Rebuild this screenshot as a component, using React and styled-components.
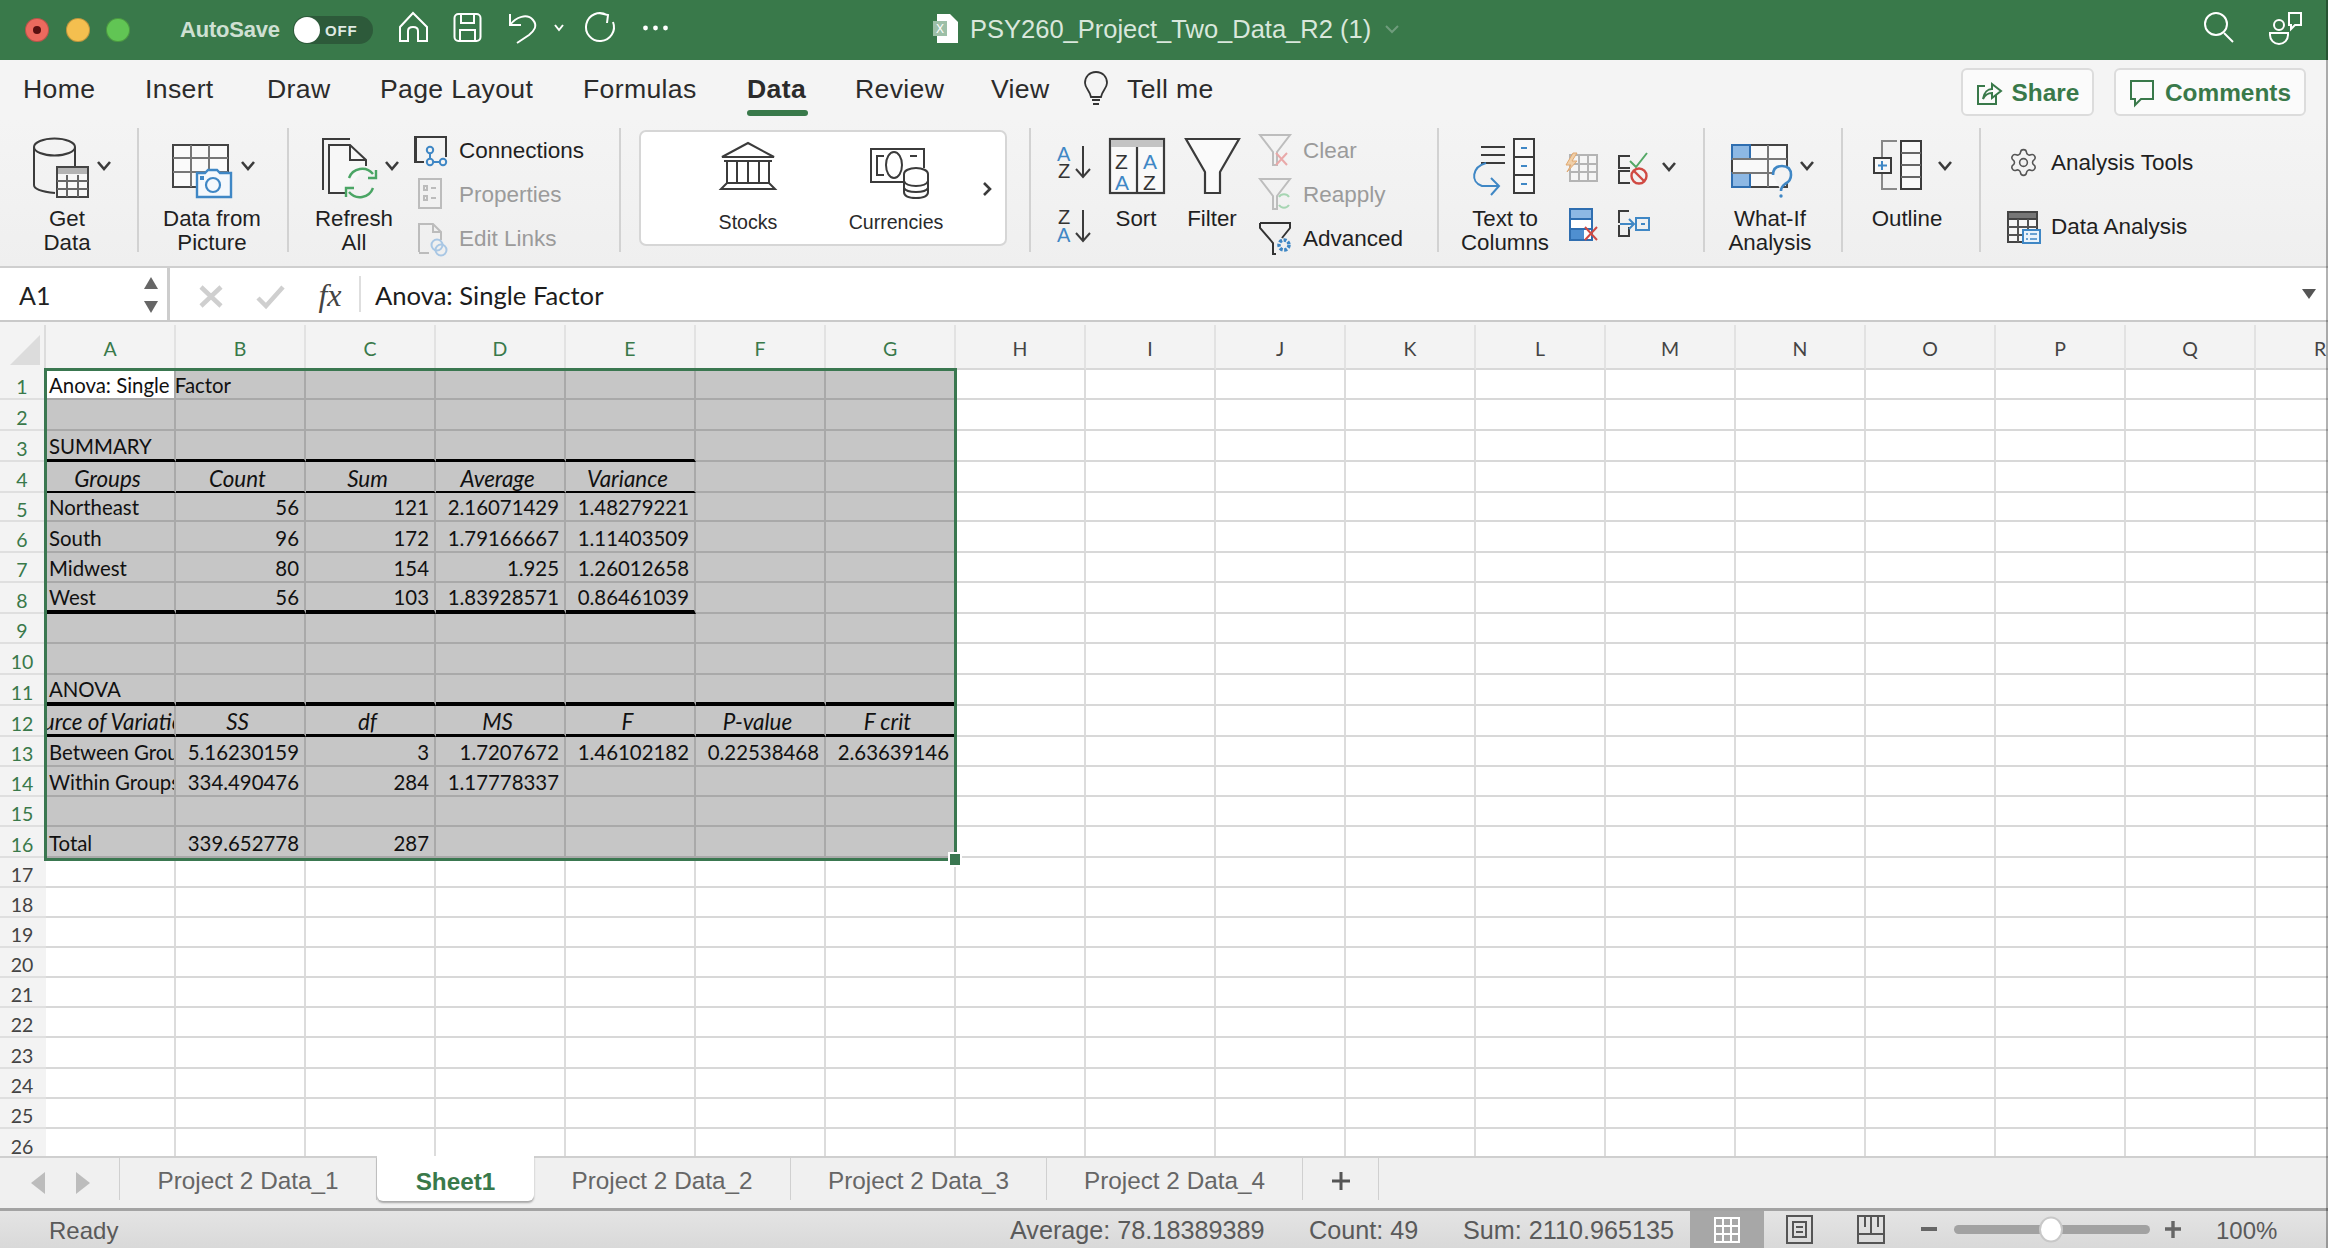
import React from 'react';
import styled, { createGlobalStyle } from 'styled-components';
import { Settings } from 'lucide-react';

const UI = '"Liberation Sans", Arial, sans-serif';
const SHEET = 'Lato, "Open Sans", sans-serif';
const GREEN = '#39794a';

const Global = createGlobalStyle`
  html, body { margin: 0; padding: 0; width: 2328px; height: 1248px; overflow: hidden; background: #fff; }
  * { box-sizing: border-box; }
`;

const Window = styled.div`
  position: relative; width: 2328px; height: 1248px; display: flex; flex-direction: column;
  font-family: ${UI}; overflow: hidden; background: #f3f3f3;
  &::after { content: ''; position: absolute; top: 0; right: 0; bottom: 0; width: 2px; background: rgba(0,0,0,.3); z-index: 5; }
`;

/* ---------- title bar ---------- */
const TitleBar = styled.header`
  height: 60px; flex: none; display: flex; align-items: center; background: ${GREEN};
`;
const Lights = styled.div`display: flex; gap: 16.5px; padding-left: 25px;`;
const Light = styled.span`
  width: 24px; height: 24px; border-radius: 50%; display: flex; align-items: center; justify-content: center;
  background: ${p => p.$c}; box-shadow: inset 0 0 0 1px rgba(0,0,0,.22);
  &::after { content: ''; width: ${p => (p.$dot ? 8 : 0)}px; height: ${p => (p.$dot ? 8 : 0)}px; border-radius: 50%; background: #5a1010; }
`;
const AutoSave = styled.span`
  margin-left: 50px; width: 113px; font-size: 22px; font-weight: 700; color: #cfe0d3; white-space: nowrap; letter-spacing: -.2px;
`;
const Toggle = styled.span`
  width: 80px; height: 28px; border-radius: 14px; background: #2d5a3a; display: flex; align-items: center;
  color: #dfe9e2; font-size: 15px; font-weight: 700; letter-spacing: .8px;
  &::before { content: ''; width: 26px; height: 26px; border-radius: 50%; background: #fff; margin: 0 5px 0 1px; }
`;
const QuickIcons = styled.div`margin-left: 20px; display: flex;`;
const DocTitle = styled.div`
  margin-left: 260px; padding-bottom: 2px; display: flex; align-items: center; gap: 12px; color: #d9e7dc; font-size: 25.5px; white-space: nowrap;
`;
const TitleRight = styled.div`margin-left: auto; margin-right: 20px; display: flex;`;

const IconSvg = styled.svg`display: block; flex: none; overflow: visible;`;
const Ico = ({ b, c = '#3b3b3b', w = 2, children }) => (
  <IconSvg width={b[2]} height={b[3]} viewBox={b.join(' ')} fill="none" stroke={c} strokeWidth={w}>{children}</IconSvg>
);
const Chev = ({ x, y, c = '#3b3b3b' }) => <path d={`M${x - 6} ${y - 4}L${x} ${y + 3}L${x + 6} ${y - 4}`} stroke={c} strokeWidth="2.6" fill="none" />;
const IconLetter = styled.text`font-family: ${UI}; stroke: none;`;

/* ---------- tabs ---------- */
const TabRow = styled.nav`
  height: 60px; flex: none; display: flex; align-items: flex-start; padding-left: 23px; background: #f4f4f4;
`;
const Tab = styled.span`
  position: relative; flex: none; width: ${p => p.$w}px; margin-right: ${p => p.$gap || 0}px;
  line-height: 58px; font-size: 26.6px; color: #2b2b2b; white-space: nowrap; letter-spacing: .35px;
  font-weight: ${p => (p.$on ? 700 : 400)};
  &::after {
    content: ''; display: ${p => (p.$on ? 'block' : 'none')}; position: absolute; left: 0; right: 0; bottom: 2px;
    height: 6px; border-radius: 3px; background: ${GREEN};
  }
`;
const TellIcon = styled.span`flex: none; width: 43px; height: 56px; display: flex; align-items: center;`;
const TopButtons = styled.div`margin-left: auto; margin-right: 22px; margin-top: 8px; display: flex; gap: 20px;`;
const TopButton = styled.button`
  height: 48px; width: ${p => p.$w}px; border: 2px solid #dcdcdc; border-radius: 6px; background: #fbfbfb;
  display: flex; align-items: center; justify-content: center; gap: 10px;
  color: ${GREEN}; font: 700 24.4px ${UI}; padding: 2px 0 0;
`;

/* ---------- ribbon ---------- */
const Ribbon = styled.section`
  height: 148px; flex: none; display: flex; align-items: flex-start; padding-top: 8px;
  background: linear-gradient(#f4f4f4, #efefef); border-bottom: 2px solid #cfcfcf;
`;
const Sep = styled.i`flex: none; width: 2px; height: 124px; background: #d2d2d2;`;
const Group = styled.div`
  flex: none; display: flex; align-items: flex-start; width: ${p => p.$w}px; padding-left: ${p => p.$pad}px;
`;
const BigTool = styled.div`
  flex: none; width: ${p => p.$w}px; margin: 0 ${p => p.$mr || 0}px 0 ${p => p.$ml || 0}px;
  display: flex; flex-direction: column; align-items: center;
`;
const BigLabel = styled.span`
  font-size: 22.3px; line-height: 24px; margin-top: -1px; text-align: center; color: #1f1f1f; white-space: pre-line;
`;
const SmallCol = styled.div`flex: none; margin-left: ${p => p.$ml || 0}px; margin-top: ${p => p.$mt || 1}px; display: flex; flex-direction: column;`;
const SmallRow = styled.div`
  height: ${p => p.$h || 44}px; display: flex; align-items: center; gap: ${p => p.$gap || 8}px;
  font-size: 22.5px; white-space: nowrap; color: ${p => (p.$off ? '#9b9b9b' : '#1f1f1f')};
`;
const IconCluster = styled.div`flex: none; margin-left: 5px;`;
const TypesBox = styled.div`
  width: 368px; height: 116px; margin-top: 2px; background: #fff; border: 2px solid #d6d6d6; border-radius: 7px;
  display: flex; align-items: flex-start; padding-left: 49px;
`;
const TypeItem = styled.div`
  flex: none; width: ${p => p.$w}px; margin-right: ${p => p.$mr}px; display: flex; flex-direction: column; align-items: center;
  font-size: 19.6px; line-height: 24px; color: #2a2a2a;
`;

/* ---------- formula bar ---------- */
const FormulaBar = styled.div`
  height: 54px; flex: none; display: flex; align-items: center; background: #fff; border-bottom: 2px solid #c9c9c9;
`;
const NameBox = styled.div`
  width: 170px; height: 52px; flex: none; display: flex; align-items: center; justify-content: space-between;
  padding: 2px 9px 0 19px; border-right: 3px solid #cdcdcd; font: 400 25px ${SHEET}; color: #222;
`;
const Fx = styled.span`
  width: 40px; margin-left: -3px; padding-top: 2px; text-align: center; font: italic 32px "Liberation Serif", serif; color: #444;
`;
const FxSep = styled.i`flex: none; width: 2px; height: 36px; margin-left: 9px; background: #dedede;`;
const FormulaText = styled.span`margin-left: 14px; padding-top: 2px; flex: 1; font: 400 25.6px ${SHEET}; color: #1c1c1c;`;
const FormulaDrop = styled.i`
  width: 0; height: 0; margin-right: 12px; border: 7px solid transparent; border-top: 10px solid #555; border-bottom: 0;
`;

/* ---------- sheet ---------- */
const Sheet = styled.div`
  position: relative; flex: 1; min-height: 0; overflow: hidden; margin-top: 3px; background: #fff;
`;
const HeaderRow = styled.div`display: flex; height: 45px; background: #f3f3f3;`;
const Corner = styled.div`
  width: 46px; flex: none; position: relative; border-right: 2px solid #dcdcdc;
  &::after {
    content: ''; position: absolute; left: 10px; bottom: 5px; width: 0; height: 0;
    border-left: 30px solid transparent; border-bottom: 30px solid #dcdcdc;
  }
`;
const ColHead = styled.div`
  flex: none; width: 130px; display: flex; align-items: center; justify-content: center; padding-top: 4px;
  font: 400 19.5px ${SHEET}; color: ${p => (p.$on ? GREEN : '#444')}; border-right: 2px solid #e2e2e2;
  border-bottom: 2px solid #d8d8d8;
`;
const Row = styled.div`display: flex; height: ${p => p.$h}px;`;
const RowHead = styled.div`
  flex: none; width: 46px; padding-right: 2px; display: flex; align-items: center; justify-content: center; padding-top: 5px;
  background: #f3f3f3; font: 400 19.5px ${SHEET}; color: ${p => (p.$on ? GREEN : '#444')};
  border-bottom: 2px solid #dfdfdf;
`;
const Cell = styled.div`
  flex: none; width: 130px; display: flex; align-items: flex-end; white-space: nowrap; position: relative;
  padding: 0 5px 0 ${p => (p.$al === 'c' ? 0 : 3)}px;
  font: ${p => (p.$it ? 'italic' : 'normal')} 400 ${p => (p.$it ? 22.4 : 20.4)}px/25px ${SHEET}; color: #111;
  overflow: ${p => (p.$spill ? 'visible' : 'hidden')}; z-index: ${p => (p.$spill ? 1 : 0)};
  justify-content: ${p => (p.$al === 'r' ? 'flex-end' : p.$al === 'c' ? 'center' : 'flex-start')};
  background: ${p => (p.$white ? '#fff' : p.$sel ? '#c6c6c6' : '#fff')};
  border-right: 2px solid ${p => (p.$sel ? '#a9a9a9' : '#dcdcdc')};
  border-bottom: ${p => p.$rule || 2}px solid ${p => (p.$rule ? '#000' : p.$sel ? '#a9a9a9' : '#d8d8d8')};
`;
const Selection = styled.div`
  position: absolute; left: 44px; top: 43px; width: 913px; height: 493px; border: 3px solid #3a7750; pointer-events: none; z-index: 2;
  &::after {
    content: ''; position: absolute; right: -6px; bottom: -7px; width: 10px; height: 11px;
    background: #3a7750; outline: 2px solid #fff;
  }
`;

/* ---------- sheet tabs / status ---------- */
const SheetTabs = styled.div`
  height: 52px; flex: none; display: flex; align-items: flex-start; background: #f0f0f0; border-top: 2px solid #cfcfcf; position: relative;
`;
const TabNav = styled.div`width: 120px; flex: none; height: 42px; display: flex; align-items: center; border-right: 1px solid #d0d0d0;`;
const SheetTab = styled.div`
  flex: none; width: ${p => p.$w}px; height: ${p => (p.$on ? 45 : 42)}px; margin-top: ${p => (p.$on ? -2 : 0)}px;
  display: flex; align-items: center; justify-content: center; font-size: 24.3px; padding-top: ${p => (p.$on ? 7 : 4)}px;
  color: ${p => (p.$on ? GREEN : '#666')}; font-weight: ${p => (p.$on ? 700 : 400)};
  background: ${p => (p.$on ? '#fff' : 'transparent')};
  border-right: ${p => (p.$on ? '0' : '1px solid #d0d0d0')};
  border-radius: ${p => (p.$on ? '0 0 6px 6px' : '0')};
  box-shadow: ${p => (p.$on ? '0 2px 2px rgba(0,0,0,.3)' : 'none')};
`;
const StatusBar = styled.footer`
  height: 40px; flex: none; display: flex; align-items: center; font-size: 24px; color: #5a5a5a;
  background: linear-gradient(#e4e4e4, #d9d9d9); border-top: 3px solid #a3a3a3;
`;
const StatusText = styled.span`flex: none; padding-top: 2px; white-space: nowrap;`;
const Ready = styled(StatusText)`margin-left: 49px; width: 961px;`;
const Stat = styled(StatusText)`width: ${p => p.$w}px; font-size: 25.2px;`;
const ViewActive = styled.div`width: 74px; height: 37px; flex: none; background: #a7a7a7; display: flex; align-items: center; justify-content: center;`;
const StatusIcons = styled.div`display: flex;`;
const Zoom = styled(StatusText)`margin-left: 12px;`;

/* ---------- data ---------- */
const COLS = 'ABCDEFGHIJKLMNOPQR'.split('');
const BOTTOMS = [400,431,462,493,522,553,583,614,644,675,706,737,767,797,827,858,888,918,948,978,1008,1038,1069,1099,1129,1160];
const L = s => ({ t: s });
const R = s => ({ t: s, al: 'r' });
const H = s => ({ t: s, al: 'c', it: true });
const DATA = {
  1: { c: [{ t: 'Anova: Single Factor', white: true, spill: true }] },
  3: { c: [L('SUMMARY')], rule: 3, to: 5 },
  4: { c: ['Groups', 'Count', 'Sum', 'Average', 'Variance'].map(H), rule: 2, to: 5 },
  5: { c: [L('Northeast'), R('56'), R('121'), R('2.16071429'), R('1.48279221')] },
  6: { c: [L('South'), R('96'), R('172'), R('1.79166667'), R('1.11403509')] },
  7: { c: [L('Midwest'), R('80'), R('154'), R('1.925'), R('1.26012658')] },
  8: { c: [L('West'), R('56'), R('103'), R('1.83928571'), R('0.86461039')], rule: 4, to: 5 },
  11: { c: [L('ANOVA')], rule: 4, to: 7 },
  12: { c: ['Source of Variation', 'SS', 'df', 'MS', 'F', 'P-value', 'F crit'].map(H), rule: 3, to: 7 },
  13: { c: [L('Between Groups'), R('5.16230159'), R('3'), R('1.7207672'), R('1.46102182'), R('0.22538468'), R('2.63639146')] },
  14: { c: [L('Within Groups'), R('334.490476'), R('284'), R('1.17778337')] },
  16: { c: [L('Total'), R('339.652778'), R('287')] },
};

const SheetGrid = () => (
  <Sheet>
    <HeaderRow>
      <Corner />
      {COLS.map((c, i) => <ColHead key={c} $on={i < 7}>{c}</ColHead>)}
    </HeaderRow>
    {BOTTOMS.map((b, i) => {
      const n = i + 1;
      const d = DATA[n] || { c: [] };
      return (
        <Row key={n} $h={b - (i ? BOTTOMS[i - 1] : 370)}>
          <RowHead $on={n <= 16}>{n}</RowHead>
          {COLS.map((c, j) => {
            const v = d.c[j] || {};
            return (
              <Cell key={c} $sel={n <= 16 && j < 7} $white={v.white} $spill={v.spill} $al={v.al} $it={v.it}
                $rule={d.rule && j < d.to ? d.rule : 0}>{v.t}</Cell>
            );
          })}
        </Row>
      );
    })}
    <Selection />
  </Sheet>
);

const BLUE = '#3f87c5';

export default function App() {
  return (
    <Window>
      <Global />
      <TitleBar>
        <Lights>
          <Light $c="#ec6a5e" $dot />
          <Light $c="#f4bf4f" />
          <Light $c="#61c554" />
        </Lights>
        <AutoSave>AutoSave</AutoSave>
        <Toggle>OFF</Toggle>
        <QuickIcons>
          <Ico b={[392, 8, 280, 44]} c="#fff" w={2}>
            <path d="M412 13L399 27V41H407V31Q407 27 412 27Q417 27 417 31V41H426V27Z" />
            <rect x="453.5" y="14" width="26" height="27" rx="4" />
            <path d="M460 14V23H473V14M459 41V30H474V41" />
            <path d="M509 14V25H520M509 25C515 17 526 13 532 20C537 26 533 31 528 35L516 43" />
            <path d="M562 25l-4 5-4-5" />
            <path d="M606 15A14 14 0 1 0 612 22M598 13L607 15L606 23" />
            <circle cx="644.5" cy="28" r="2.4" fill="#fff" stroke="none" />
            <circle cx="654.5" cy="28" r="2.4" fill="#fff" stroke="none" />
            <circle cx="664.5" cy="28" r="2.4" fill="#fff" stroke="none" />
          </Ico>
        </QuickIcons>
        <DocTitle>
          <Ico b={[933, 12, 25, 32]} c="none">
            <path d="M937 13H950L958 21V42H937Z" fill="#fff" />
            <rect x="933" y="20" width="14" height="15" fill="#9dbfa7" />
            <IconLetter x="936" y="32" fontSize="12" fill="#fff">X</IconLetter>
          </Ico>
          PSY260_Project_Two_Data_R2 (1)
          <Ico b={[1378, 20, 18, 16]} c="#6f9c7c"><path d="M1381 25l6 6 6-6" /></Ico>
        </DocTitle>
        <TitleRight>
          <Ico b={[2200, 8, 108, 44]} c="#fff" w={2}>
            <circle cx="2216" cy="24" r="11" />
            <path d="M2224 33L2233 42" />
            <circle cx="2279" cy="25" r="5" />
            <path d="M2270 33H2288V35A9 9 0 0 1 2270 35Z" />
            <path d="M2289 13H2301V25H2295L2291 29V25H2289Z" />
          </Ico>
        </TitleRight>
      </TitleBar>

      <TabRow>
        <Tab $w={122}>Home</Tab>
        <Tab $w={122}>Insert</Tab>
        <Tab $w={113}>Draw</Tab>
        <Tab $w={203}>Page Layout</Tab>
        <Tab $w={164}>Formulas</Tab>
        <Tab $w={61} $gap={47} $on>Data</Tab>
        <Tab $w={136}>Review</Tab>
        <Tab $w={93}>View</Tab>
        <TellIcon>
          <Ico b={[1084, 70, 24, 36]} c="#333" w={1.8}>
            <path d="M1096 72C1089 72 1085 77 1085 83C1085 88 1090 91 1091 97H1101C1102 91 1107 88 1107 83C1107 77 1103 72 1096 72Z" />
            <path d="M1092 100H1100M1093 104H1099" />
          </Ico>
        </TellIcon>
        <Tab $w={90}>Tell me</Tab>
        <TopButtons>
          <TopButton $w={133}>
            <Ico b={[0, 0, 26, 26]} c={GREEN} w={2}>
              <path d="M9 6H2V24H20V15" />
              <path d="M7 19C8 12 12 9 16 9V4L25 11L16 18V13C12 13 9 15 7 19Z" />
            </Ico>
            Share
          </TopButton>
          <TopButton $w={192}>
            <Ico b={[0, 0, 26, 28]} c={GREEN} w={2}>
              <path d="M2 2H24V20H12L6 26V20H2Z" />
            </Ico>
            Comments
          </TopButton>
        </TopButtons>
      </TabRow>

      <Ribbon>
        <Group $w={137} $pad={14}>
          <BigTool $w={106}>
            <Ico b={[14, 128, 106, 80]}>
              <ellipse cx="54.5" cy="147" rx="20.5" ry="8.5" />
              <path d="M34 147V185Q34 191 55 193M75 147V167" />
              <rect x="57" y="167" width="31" height="30" fill="#f7f7f7" stroke="#444" />
              <rect x="58" y="168" width="29" height="6" fill="#b4b4b4" stroke="none" />
              <path d="M67 175V197M78 175V197M57 181H88M57 189H88" stroke="#666" />
              <Chev x={104} y={166} />
            </Ico>
            <BigLabel>{'Get\nData'}</BigLabel>
          </BigTool>
        </Group>
        <Sep />
        <Group $w={148} $pad={15}>
          <BigTool $w={116}>
            <Ico b={[154, 128, 116, 80]}>
              <rect x="173" y="145" width="55" height="42" fill="#fafafa" stroke="#444" />
              <path d="M191 145V187M209 145V187M173 158H228M173 172H228" stroke="#777" />
              <path d="M197 173H205L208 170H217L220 173H231V197H197Z" fill="#f4f8fc" stroke={BLUE} strokeWidth="2.4" />
              <circle cx="213" cy="185" r="7" stroke={BLUE} strokeWidth="2.2" />
              <rect x="200" y="176" width="4" height="4" fill={BLUE} stroke="none" />
              <Chev x={248} y={166} />
            </Ico>
            <BigLabel>{'Data from\nPicture'}</BigLabel>
          </BigTool>
        </Group>
        <Sep />
        <Group $w={330} $pad={19}>
          <BigTool $w={92}>
            <Ico b={[308, 128, 92, 80]}>
              <path d="M323 190V139H350" />
              <path d="M345 193H329V145H350L366 160V166" fill="#f7f7f7" />
              <path d="M350 145V160H366" />
              <g stroke="#4aa564" strokeWidth="2.4">
                <path d="M349 178A14 14 0 0 1 373 174M376 170V178H368" />
                <path d="M373 188A14 14 0 0 1 349 192M346 197V188H354" />
              </g>
              <Chev x={392} y={166} />
            </Ico>
            <BigLabel>{'Refresh\nAll'}</BigLabel>
          </BigTool>
          <SmallCol $ml={14}>
            <SmallRow $gap={9}>
              <Ico b={[414, 132, 36, 38]}>
                <path d="M424 162H415V137H446V157" />
                <path d="M416 162V137" />
                <g stroke={BLUE}>
                  <circle cx="430" cy="150" r="3.2" /><circle cx="430" cy="162" r="3.2" /><circle cx="443" cy="162" r="3.2" />
                  <path d="M430 153V159M433 162H440" />
                </g>
              </Ico>
              Connections
            </SmallRow>
            <SmallRow $gap={9} $off>
              <Ico b={[414, 176, 36, 38]} c="#bcbcbc">
                <rect x="419" y="179" width="22" height="29" />
                <path d="M424 186H427V190H424ZM424 196H427V200H424Z" />
                <path d="M431 188H436M431 198H436" />
              </Ico>
              Properties
            </SmallRow>
            <SmallRow $gap={9} $off>
              <Ico b={[414, 220, 36, 38]} c="#bcbcbc">
                <path d="M419 252V224H433L441 232V240M433 224V232H441M419 253H429" />
                <g stroke="#a9c7e4"><circle cx="437" cy="245" r="5.5" /><circle cx="441" cy="250" r="5.5" /></g>
              </Ico>
              Edit Links
            </SmallRow>
          </SmallCol>
        </Group>
        <Sep />
        <Group $w={408} $pad={18}>
          <TypesBox>
            <TypeItem $w={116} $mr={30}>
              <Ico b={[690, 132, 116, 78]}>
                <path d="M722 157L748 143L774 157Z" />
                <path d="M727 161V183M737 161V183M748 161V183M759 161V183M769 161V183M724 161H772" />
                <path d="M727 183H769L775 189H721Z" />
              </Ico>
              Stocks
            </TypeItem>
            <TypeItem $w={120} $mr={22}>
              <Ico b={[836, 132, 120, 78]}>
                <path d="M911 182H871V149H924V168" />
                <path d="M884 156H877V175H884M917 156H910M910 175H905" />
                <ellipse cx="894" cy="165" rx="8" ry="13" />
                <ellipse cx="916" cy="174" rx="12" ry="6" fill="#fff" />
                <path d="M904 174V192Q904 198 916 198Q928 198 928 192V174M904 181Q906 186 916 186Q926 186 928 181M904 188Q906 192 916 192Q926 192 928 188" fill="#fff" />
              </Ico>
              Currencies
            </TypeItem>
            <Ico b={[980, 132, 22, 112]} w={2.6}><path d="M986 183L992 189L986 195" /></Ico>
          </TypesBox>
        </Group>
        <Sep />
        <Group $w={406} $pad={26}>
          <Ico b={[1057, 128, 36, 120]}>
            <IconLetter x="1057" y="161" fontSize="20" fill={BLUE}>A</IconLetter>
            <IconLetter x="1058" y="178" fontSize="20" fill="#333">Z</IconLetter>
            <path d="M1083 146V177M1076 169L1083 177L1090 169" />
            <IconLetter x="1058" y="224" fontSize="20" fill="#333">Z</IconLetter>
            <IconLetter x="1057" y="242" fontSize="20" fill={BLUE}>A</IconLetter>
            <path d="M1083 210V241M1076 233L1083 241L1090 233" />
          </Ico>
          <BigTool $w={70} $mr={6} $ml={8}>
            <Ico b={[1101, 128, 70, 80]} w={2.2}>
              <rect x="1110" y="139" width="54" height="54" fill="#f9f9f9" />
              <rect x="1111" y="140" width="52" height="7" fill="#c3c3c3" stroke="none" />
              <path d="M1137 147V193" />
              <IconLetter x="1115" y="169" fontSize="21" fill="#333">Z</IconLetter>
              <IconLetter x="1115" y="190" fontSize="21" fill={BLUE}>A</IconLetter>
              <IconLetter x="1143" y="169" fontSize="21" fill={BLUE}>A</IconLetter>
              <IconLetter x="1143" y="190" fontSize="21" fill="#333">Z</IconLetter>
            </Ico>
            <BigLabel>Sort</BigLabel>
          </BigTool>
          <BigTool $w={70}>
            <Ico b={[1177, 128, 70, 80]} w={2.2}>
              <path d="M1186 139H1239L1220 172V193H1205V172Z" fill="#fafafa" />
            </Ico>
            <BigLabel>Filter</BigLabel>
          </BigTool>
          <SmallCol $ml={12}>
            <SmallRow $off>
              <Ico b={[1259, 132, 36, 38]} c="#bdbdbd">
                <path d="M1260 135H1290L1277 152V165H1273V152Z" />
                <path d="M1276 153L1287 165M1287 153L1276 165" stroke="#e9a9a9" />
              </Ico>
              Clear
            </SmallRow>
            <SmallRow $off>
              <Ico b={[1259, 176, 36, 38]} c="#bdbdbd">
                <path d="M1260 179H1290L1277 196V209H1273V196Z" />
                <g stroke="#a6d5b2"><path d="M1279 197A6 6 0 0 1 1289 197M1289 205A6 6 0 0 1 1279 205" /></g>
              </Ico>
              Reapply
            </SmallRow>
            <SmallRow>
              <Ico b={[1259, 220, 36, 38]} c="#333">
                <path d="M1260 223H1290V228L1282 238M1260 223V228L1273 243V254H1276" />
                <circle cx="1284" cy="245" r="5" stroke={BLUE} strokeWidth="3.5" strokeDasharray="3 1.5" />
              </Ico>
              Advanced
            </SmallRow>
          </SmallCol>
        </Group>
        <Sep />
        <Group $w={264} $pad={16}>
          <BigTool $w={100}>
            <Ico b={[1455, 128, 100, 80]}>
              <path d="M1481 147H1505M1481 155H1505M1481 163H1505" />
              <rect x="1514" y="139" width="20" height="54" fill="#f8f8f8" />
              <path d="M1514 157H1534M1514 175H1534" />
              <path d="M1521 148H1527M1521 166H1527M1521 184H1527" stroke={BLUE} />
              <path d="M1486 163C1472 167 1470 182 1482 186H1498M1491 178L1499 186L1491 195" stroke={BLUE} />
            </Ico>
            <BigLabel>{'Text to\nColumns'}</BigLabel>
          </BigTool>
          <IconCluster>
            <Ico b={[1560, 128, 124, 120]}>
              <g stroke="#b4b4b4">
                <rect x="1570" y="155" width="27" height="26" fill="#f5f5f5" />
                <path d="M1579 155V181M1588 155V181M1570 164H1597M1570 172H1597" />
              </g>
              <path d="M1573 153L1566 165H1571L1567 172L1577 161H1572L1577 153Z" fill="#f0cfa8" stroke="#e0a870" strokeWidth="1" />
              <path d="M1630 156H1619V168H1630M1630 171H1619V183H1630" />
              <path d="M1630 161L1636 167L1647 153" stroke="#54a866" />
              <circle cx="1639" cy="176" r="7.5" stroke="#d04a43" strokeWidth="2.4" />
              <path d="M1634 171L1644 181" stroke="#d04a43" strokeWidth="2.4" />
              <Chev x={1669} y={167} />
              <rect x="1570" y="209" width="22" height="31" fill="#fff" stroke="#2f6eb0" />
              <rect x="1571" y="210" width="20" height="9" fill="#8db8e4" stroke="none" />
              <path d="M1570 219H1592M1570 229H1592" stroke="#2f6eb0" />
              <rect x="1571" y="230" width="13" height="9" fill="#4f8fd0" stroke="none" />
              <path d="M1585 227L1597 240M1597 227L1585 240" stroke="#d04a43" />
              <path d="M1629 211H1619V223M1629 227V236H1619V225" />
              <rect x="1636" y="218" width="13" height="12" stroke={BLUE} />
              <path d="M1641 224H1645" stroke={BLUE} />
              <path d="M1620 224H1634M1629 219L1634 224L1629 229" stroke={BLUE} />
            </Ico>
          </IconCluster>
        </Group>
        <Sep />
        <Group $w={136} $pad={15}>
          <BigTool $w={100}>
            <Ico b={[1720, 128, 100, 80]}>
              <rect x="1732" y="145" width="55" height="42" fill="#f9f9f9" stroke="#444" />
              <rect x="1732" y="145" width="18" height="14" fill="#8db8e4" stroke="#2f6eb0" />
              <rect x="1732" y="173" width="18" height="14" fill="#8db8e4" stroke="#2f6eb0" />
              <path d="M1768 145V187M1732 159H1787M1732 173H1787" stroke="#777" />
              <path d="M1773 175Q1773 166 1782 166Q1791 166 1791 175Q1791 181 1785 184Q1781 187 1781 191" stroke={BLUE} strokeWidth="2.6" fill="#f3f3f3" />
              <circle cx="1781" cy="196" r="1.7" fill={BLUE} stroke="none" />
              <Chev x={1807} y={166} />
            </Ico>
            <BigLabel>{'What-If\nAnalysis'}</BigLabel>
          </BigTool>
        </Group>
        <Sep />
        <Group $w={136} $pad={14}>
          <BigTool $w={100}>
            <Ico b={[1857, 128, 100, 80]}>
              <rect x="1901" y="141" width="20" height="48" fill="#f8f8f8" />
              <path d="M1901 153H1921M1901 165H1921M1901 177H1921" stroke="#666" />
              <path d="M1897 141H1882V158M1882 173V189H1897" stroke="#888" />
              <rect x="1874" y="158" width="17" height="15" fill="#f8f8f8" />
              <path d="M1882 161V170M1878 165.5H1887" stroke={BLUE} />
              <Chev x={1945} y={166} />
            </Ico>
            <BigLabel>Outline</BigLabel>
          </BigTool>
        </Group>
        <Sep />
        <Group $w={347} $pad={26}>
          <SmallCol $mt={3}>
            <SmallRow $h={64}>
              <Ico b={[2007, 146, 36, 34]} c="none">
                <foreignObject x="2008" y="147" width="32" height="32">
                  <Settings size={31} strokeWidth={1.2} color="#555" />
                </foreignObject>
              </Ico>
              Analysis Tools
            </SmallRow>
            <SmallRow $h={64}>
              <Ico b={[2007, 208, 36, 36]}>
                <rect x="2008" y="211" width="29" height="30" fill="#f8f8f8" stroke="#444" />
                <rect x="2008" y="211" width="29" height="7" fill="#777" stroke="#444" />
                <path d="M2018 218V241M2028 218V228M2008 226H2037M2008 234H2022" stroke="#555" />
                <rect x="2023" y="229" width="17" height="13" fill="#eaf3fb" stroke={BLUE} />
                <path d="M2026 233H2028M2030 233H2037M2026 238H2028M2030 238H2037" stroke={BLUE} strokeWidth="1.5" />
              </Ico>
              Data Analysis
            </SmallRow>
          </SmallCol>
        </Group>
      </Ribbon>

      <FormulaBar>
        <NameBox>
          A1
          <Ico b={[146, 276, 14, 40]} c="none">
            <path d="M153 278L160 290H146Z" fill="#666" />
            <path d="M153 314L160 302H146Z" fill="#666" />
          </Ico>
        </NameBox>
        <Ico b={[170, 270, 143, 50]} c="#cfcfcf" w={4.5}>
          <path d="M201 288L221 307M221 288L201 307" />
          <path d="M258 299L266 307L283 288" />
        </Ico>
        <Fx>fx</Fx>
        <FxSep />
        <FormulaText>Anova: Single Factor</FormulaText>
        <FormulaDrop />
      </FormulaBar>

      <SheetGrid />

      <SheetTabs>
        <TabNav>
          <Ico b={[0, 1158, 119, 42]} c="none">
            <path d="M45 1172V1194L31 1183Z" fill="#bcbcbc" />
            <path d="M76 1172V1194L90 1183Z" fill="#bcbcbc" />
          </Ico>
        </TabNav>
        <SheetTab $w={257}>Project 2 Data_1</SheetTab>
        <SheetTab $w={157} $on>Sheet1</SheetTab>
        <SheetTab $w={257}>Project 2 Data_2</SheetTab>
        <SheetTab $w={256}>Project 2 Data_3</SheetTab>
        <SheetTab $w={256}>Project 2 Data_4</SheetTab>
        <SheetTab $w={76}>
          <Ico b={[0, 0, 20, 20]} c="#555" w={3}><path d="M10 1V19M1 10H19" /></Ico>
        </SheetTab>
      </SheetTabs>

      <StatusBar>
        <Ready>Ready</Ready>
        <Stat $w={299}>Average: 78.18389389</Stat>
        <Stat $w={154}>Count: 49</Stat>
        <Stat $w={227}>Sum: 2110.965135</Stat>
        <ViewActive>
          <Ico b={[0, 0, 26, 26]} c="#fff" w={2}>
            <rect x="1" y="1" width="24" height="24" />
            <path d="M9 1V25M17 1V25M1 9H25M1 17H25" />
          </Ico>
        </ViewActive>
        <StatusIcons>
          <Ico b={[1764, 1211, 440, 37]} c="#555" w={2}>
            <rect x="1787" y="1216" width="25" height="27" />
            <path d="M1793 1222H1806V1237H1793ZM1796 1227H1803M1796 1232H1803" />
            <rect x="1858" y="1216" width="26" height="27" />
            <path d="M1858 1234H1884M1871 1216V1234M1865 1216V1227M1878 1216V1227" />
            <path d="M1921 1229H1937" strokeWidth="4" stroke="#666" />
            <rect x="1954" y="1225" width="196" height="9" rx="4.5" fill="#a2a2a2" stroke="none" />
            <ellipse cx="2051" cy="1229.5" rx="11" ry="12" fill="#fff" stroke="#c8c8c8" />
            <path d="M2165 1229H2181M2173 1221V1238" strokeWidth="3.4" stroke="#666" />
          </Ico>
        </StatusIcons>
        <Zoom>100%</Zoom>
      </StatusBar>
    </Window>
  );
}
